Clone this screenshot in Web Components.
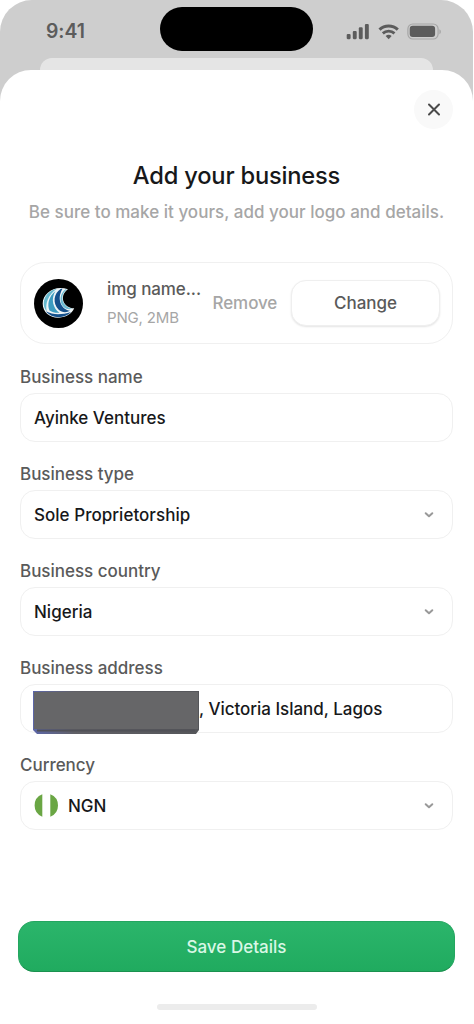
<!DOCTYPE html>
<html lang="en">
<head>
<meta charset="utf-8">
<meta name="viewport" content="width=device-width, initial-scale=1">
<title>Add your business</title>
<style>
html,body{margin:0;padding:0;background:#fff}
body{font-family:Inter,"Liberation Sans",sans-serif;font-size:17px;font-weight:500;color:#17181a}
</style>
</head>
<body>
<phone-screen>
  <status-bar slot="status" time="9:41"></status-bar>
  <close-button></close-button>
  <sheet-heading><span slot="title">Add your business</span><span slot="sub">Be sure to make it yours, add your logo and details.</span></sheet-heading>
  <logo-upload><brand-logo slot="logo"></brand-logo><span slot="name">img name...</span><span slot="meta">PNG, 2MB</span></logo-upload>
  <form-field label="Business name"><span>Ayinke Ventures</span></form-field>
  <form-field label="Business type" select style="--ls:.03px"><span>Sole Proprietorship</span></form-field>
  <form-field label="Business country" select><span>Nigeria</span></form-field>
  <form-field label="Business address" style="--ls:-.03px"><redacted-text></redacted-text><span>, Victoria Island, Lagos</span></form-field>
  <form-field label="Currency" select><flag-icon></flag-icon><span>NGN</span></form-field>
  <save-button>Save Details</save-button>
  <home-indicator></home-indicator>
</phone-screen>
<script>
const define = (name, html, setup) => customElements.define(name, class extends HTMLElement {
  constructor() {
    super();
    const t = document.createElement('template');
    t.innerHTML = html;
    this.attachShadow({mode: 'open'}).append(t.content.cloneNode(true));
    if (setup) setup(this, this.shadowRoot);
  }
});

define('phone-screen', `<style>
:host{display:flex;flex-direction:column;box-sizing:border-box;width:473px;height:1024px;background:#cecece;border-radius:32px 32px 0 0;overflow:hidden}
.peek{flex:none;height:12px;margin:0 40px;background:#e5e5e5;border-radius:18px 18px 0 0}
main{flex:1;display:flex;flex-direction:column;background:#fff;border-radius:31px 31px 0 0;padding:0 20px}
</style><slot name="status"></slot><div class="peek"></div><main><slot></slot></main>`);

define('status-bar', `<style>
:host{display:grid;grid-template-columns:160px 153px 160px;height:58px;flex:none;color:#5c5c5c}
time{font-size:19.4px;font-weight:600;line-height:24px;margin:19px 0 0 46px;letter-spacing:-.05px}
.island{height:44px;margin-top:7px;border-radius:22px;background:#000}
svg{display:block;margin:21px 0 0 31px}
</style><time></time><div class="island"></div>
<svg width="100" height="20" viewBox="344 21 100 20" fill="#5c5c5c">
<rect x="346.7" y="34" width="3.9" height="5.2" rx="1.1"/><rect x="352.8" y="31" width="3.9" height="8.2" rx="1.1"/><rect x="358.8" y="27.3" width="3.9" height="11.9" rx="1.1"/><rect x="364.9" y="24" width="3.9" height="15.2" rx="1.1"/>
<g fill="none" stroke="#5c5c5c"><path stroke-width="3" d="M379.5 29.6a13.2 13.2 0 0 1 18.3 0"/><path stroke-width="2.8" d="M382.8 33.4a8.6 8.6 0 0 1 11.7 0"/></g>
<path d="M388.65 39.2l-3-3.1a4.4 4.4 0 0 1 6 0z"/>
<rect x="407.9" y="24" width="30.2" height="15" rx="4.9" fill="none" stroke="#a6a6a6" stroke-width="1.2"/><rect x="409.7" y="25.8" width="25.4" height="11.2" rx="3"/><path fill="#a6a6a6" d="M439.4 29.2v5c2-.8 2-4.2 0-5z"/>
</svg>`, (h, r) => r.querySelector('time').textContent = h.getAttribute('time'));

define('close-button', `<style>
:host{display:flex;justify-content:flex-end;height:58px;flex:none}
button{all:unset;display:grid;place-items:center;width:39px;height:39px;margin:20px 0 0;border-radius:50%;background:#f9f9f9}
</style><button aria-label="Close"><svg width="14" height="14" fill="none" stroke="#4b4b4b" stroke-width="2" stroke-linecap="round"><path d="M2 1.500l10 10M12 1.500L2 11.500"/></svg></button>`);

define('sheet-heading', `<style>
:host{display:flex;flex-direction:column;align-items:center;flex:none;height:134px;white-space:nowrap}
h1{margin:33px 0 0;font-size:23.700px;font-weight:500;line-height:30px;letter-spacing:-.2px}
p{margin:10px 0 0;font-size:17px;font-weight:500;line-height:22px;color:#a6a6a6;letter-spacing:.02px}
</style><h1><slot name="title"></slot></h1><p><slot name="sub"></slot></p>`);

define('brand-logo', `<style>:host,svg{display:block}</style>
<svg width="49" height="49" viewBox="0 0 49 49"><circle cx="24.5" cy="24.500" r="24.500"/>
<path fill="#eef5f7" d="M34 10.300C21 5.500 8.700 14 8.700 24.500c0 9.500 8 14.700 16.300 14.200 7.500-.4 12.800-4 15.200-9.400C35.500 29.500 30.500 26.500 29.200 21.500c-1-4.500 1-8.700 4.800-11.200z"/>
<path fill="#66b9ce" d="M23 9.800C15 11.500 9.800 17.500 9.800 24.500c0 3.500 1.200 6 3 7.800C11 25 14 15.500 23 9.800z"/>
<path fill="#3c9cc0" d="M21.500 12C14.500 17.500 13 26 15.500 31.500c3 2 6 2.500 10 2.300C19 29.500 16.500 20 21.500 12z"/>
<path fill="#15508b" d="M27 9.700C19.500 14.500 18.500 24 24.500 30.500c3.500 3.300 8 3.300 11.500 1.300C28 30.500 22 21 28.500 9.700z"/>
<path fill="#6cbbd2" d="M31.500 10.300C25.500 14.500 25 23.500 29.500 28c2.500 2.300 6 2.600 8.700 1.800C32.500 28.500 28.200 24 28.200 19c0-3.500 2-6.500 4.500-8.500z"/>
<path fill="#15508b" d="M12 32.300C19 36.300 28 36 37 33 31 40 17.500 40 12 32.300z"/>
</svg>`);

define('logo-upload', `<style>
:host{display:flex;align-items:center;box-sizing:border-box;flex:none;height:82px;margin-bottom:19px;border:1.5px solid #f0f0f0;border-radius:25px;padding:0 12px 0 13px;white-space:nowrap}
.text{display:flex;flex-direction:column;width:105.500px;margin-left:24px}
.name{color:#5a5a5a;line-height:22px;letter-spacing:-.08px}
.meta{color:#a6a6a6;font-size:15px;font-weight:400;line-height:20px;margin-top:8px;letter-spacing:-.15px}
.remove{color:#a6a6a6;letter-spacing:-.08px}
.change{all:unset;box-sizing:border-box;margin-left:auto;width:149px;height:46px;border:1px solid #efefef;border-radius:15px;text-align:center;color:#5a5a5a;background:#fff;box-shadow:0 1px 2px #0000001c;letter-spacing:0}
</style><slot name="logo"></slot><div class="text"><span class="name"><slot name="name"></slot></span><span class="meta"><slot name="meta"></slot></span></div><span class="remove">Remove</span><button class="change">Change</button>`);

define('form-field', `<style>
:host{display:flex;flex-direction:column;flex:none;height:97px;white-space:nowrap}
label{height:30px;line-height:28px;color:#5a5a5a;letter-spacing:-.02px}
.box{display:flex;align-items:center;box-sizing:border-box;height:49px;border:1.5px solid #f0f0f0;border-radius:15px;padding:0 18px 0 13px;letter-spacing:var(--ls,0)}
svg{margin-left:auto;display:none}
:host([select]) svg{display:block}
</style><label></label><div class="box"><slot></slot><svg width="11" height="8" fill="none" stroke="#999" stroke-width="2" stroke-linecap="round" stroke-linejoin="round"><path d="M2.700 2.200l3.300 3 3.300-3"/></svg></div>`,
(h, r) => r.querySelector('label').textContent = h.getAttribute('label'));

define('redacted-text', `<style>
:host{display:block;width:166px;height:43px;margin:7px 0 0 -1px;flex:none}
svg{display:block}
</style><svg width="166" height="43"><defs><linearGradient id="g" x2="1"><stop stop-color="#5c66a8"/><stop offset=".25" stop-color="#606066"/><stop offset="1" stop-color="#55565a"/></linearGradient></defs><path fill="url(#g)" d="M0 0h166v39l-3 4H4l-4-4z"/><path fill="#666668" d="M1 1h164v37H1z"/><path fill="#505157" d="M4 38.500h158v2H4z"/></svg>`);

define('flag-icon', `<style>:host{display:block;margin:0 10px 0 -1px}svg{display:block}</style>
<svg width="25" height="25"><path fill="#6aa644" d="M9.300 1.300v22.400A12 12 0 0 1 9.300 1.300zM17.300 1.300v22.400a12 12 0 0 0 0-22.400z"/></svg>`);

define('save-button', `<style>
:host{display:block;flex:none;margin:73px -2px 0;height:51px;width:437px}
button{all:unset;box-sizing:border-box;display:block;width:437px;height:51px;border-radius:16px;border:1px solid #24a660;border-bottom-color:#1b914f;background:linear-gradient(#2bb56b,#20ab5f);color:#d9f7e5;text-align:center;letter-spacing:.02px}
</style><button><slot></slot></button>`);

define('home-indicator', `<style>:host{display:block;flex:none;width:160px;height:6px;margin:32px auto 0;border-radius:3px;background:#ececec}</style>`);
</script>
</body>
</html>
